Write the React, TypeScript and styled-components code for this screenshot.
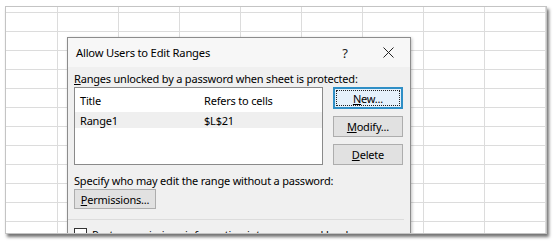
import React from "react";
import styled, { createGlobalStyle, css } from "styled-components";

const Global = createGlobalStyle`
  html, body {
    margin: 0;
    padding: 0;
    background: #ffffff;
  }
  body {
    font-family: "Noto Sans", "Open Sans", sans-serif;
    font-size: 11px;
    letter-spacing: -0.2px;
    color: #000;
  }
  * {
    box-sizing: border-box;
  }
`;

const Page = styled.div`
  width: 557px;
  height: 244px;
  padding: 6px 0 0 5px;
`;

const Sheet = styled.div`
  position: relative;
  width: 542px;
  height: 228px;
  border: 1px solid #c4c4c4;
  box-shadow: 2px 3px 3px rgba(0, 0, 0, 0.55);
  overflow: hidden;
  background-color: #ffffff;
  background-image: linear-gradient(to right, #dcdcdc 1px, transparent 1px),
    linear-gradient(to bottom, #dcdcdc 1px, transparent 1px);
  background-size: 61px 100%, 100% 19px;
  background-position: 51px 0, 0 5px;
`;

const Dialog = styled.div`
  position: absolute;
  left: 61px;
  top: 30px;
  width: 344px;
  height: 220px;
  background: #f0f0f0;
  border: 1px solid #8c8c8c;
  box-shadow: 1px 1px 3px rgba(0, 0, 0, 0.25);
`;

const TitleBar = styled.div`
  height: 29px;
  display: flex;
  align-items: center;
  padding-left: 8px;
  background: #f7f7f7;
  font-size: 11.2px;
`;

const TitleText = styled.span`
  flex: 1;
`;

const TitleButton = styled.span<{ $width: number }>`
  width: ${({ $width }) => $width}px;
  display: flex;
  justify-content: center;
  align-items: center;
  font-size: 13px;
  color: #222;
`;

const Body = styled.div`
  padding: 4px 7px 0 6px;
`;

const Label = styled.div<{ $gap?: number }>`
  line-height: 16px;
  height: 16px;
  white-space: nowrap;
  margin-top: ${({ $gap }) => $gap ?? 0}px;
`;

const Key = styled.span`
  text-decoration: underline;
  text-underline-offset: 1px;
`;

const ListRow = styled.div`
  display: flex;
  gap: 10px;
`;

const ListBox = styled.div`
  width: 249px;
  height: 78px;
  background: #ffffff;
  border: 1px solid #8a8a8a;
`;

const ListLine = styled.div<{ $header?: boolean }>`
  display: grid;
  grid-template-columns: 124px 1fr;
  padding-left: 5px;
  align-items: center;
  height: ${({ $header }) => ($header ? 24 : 16)}px;
  ${({ $header }) =>
    !$header &&
    css`
      background: #efefef;
    `}
`;

const ButtonColumn = styled.div`
  display: flex;
  flex-direction: column;
  gap: 7px;
`;

const DlgButton = styled.div<{ $width?: number; $height?: number; $default?: boolean }>`
  position: relative;
  width: ${({ $width }) => $width ?? 70}px;
  height: ${({ $height }) => $height ?? 21}px;
  display: flex;
  align-items: center;
  justify-content: center;
  background: #e1e1e1;
  border: 1px solid #adadad;
  white-space: nowrap;
  ${({ $default }) =>
    $default &&
    css`
      background: #e5f1fb;
      border: 2px solid #2f8fc6;
      &::after {
        content: "";
        position: absolute;
        inset: 1px;
        border: 1px dotted #222;
      }
    `}
`;

const Separator = styled.div`
  height: 1px;
  background: #dcdcdc;
  margin: 10px 0 0 -6px;
  width: 336px;
`;

const CheckRow = styled.div`
  display: flex;
  align-items: flex-start;
  gap: 5px;
  margin-top: 8px;
`;

const CheckBox = styled.span`
  width: 13px;
  height: 13px;
  border: 1px solid #333;
  background: #fff;
  flex: none;
`;

const CheckText = styled.span`
  line-height: 13px;
  white-space: nowrap;
`;

export default function App() {
  return (
    <Page>
      <Global />
      <Sheet>
        <Dialog>
          <TitleBar>
            <TitleText>Allow Users to Edit Ranges</TitleText>
            <TitleButton $width={42}>?</TitleButton>
            <TitleButton $width={44}>
              <svg width="11" height="11" viewBox="0 0 11 11">
                <path d="M0.5 0.5 L10.5 10.5 M10.5 0.5 L0.5 10.5" stroke="#222" strokeWidth="1" fill="none" />
              </svg>
            </TitleButton>
          </TitleBar>
          <Body>
            <Label>
              <Key>R</Key>anges unlocked by a password when sheet is protected:
            </Label>
            <ListRow>
              <ListBox>
                <ListLine $header>
                  <span>Title</span>
                  <span>Refers to cells</span>
                </ListLine>
                <ListLine>
                  <span>Range1</span>
                  <span>$L$21</span>
                </ListLine>
              </ListBox>
              <ButtonColumn>
                <DlgButton $default $height={22}>
                  <span>
                    <Key>N</Key>ew...
                  </span>
                </DlgButton>
                <DlgButton>
                  <span>
                    <Key>M</Key>odify...
                  </span>
                </DlgButton>
                <DlgButton>
                  <span>
                    <Key>D</Key>elete
                  </span>
                </DlgButton>
              </ButtonColumn>
            </ListRow>
            <Label $gap={8}>Specify who may edit the range without a password:</Label>
            <DlgButton $width={82} $height={20}>
              <span>
                <Key>P</Key>ermissions...
              </span>
            </DlgButton>
            <Separator />
            <CheckRow>
              <CheckBox />
              <CheckText>Paste permissions information into a new workbook</CheckText>
            </CheckRow>
          </Body>
        </Dialog>
      </Sheet>
    </Page>
  );
}
